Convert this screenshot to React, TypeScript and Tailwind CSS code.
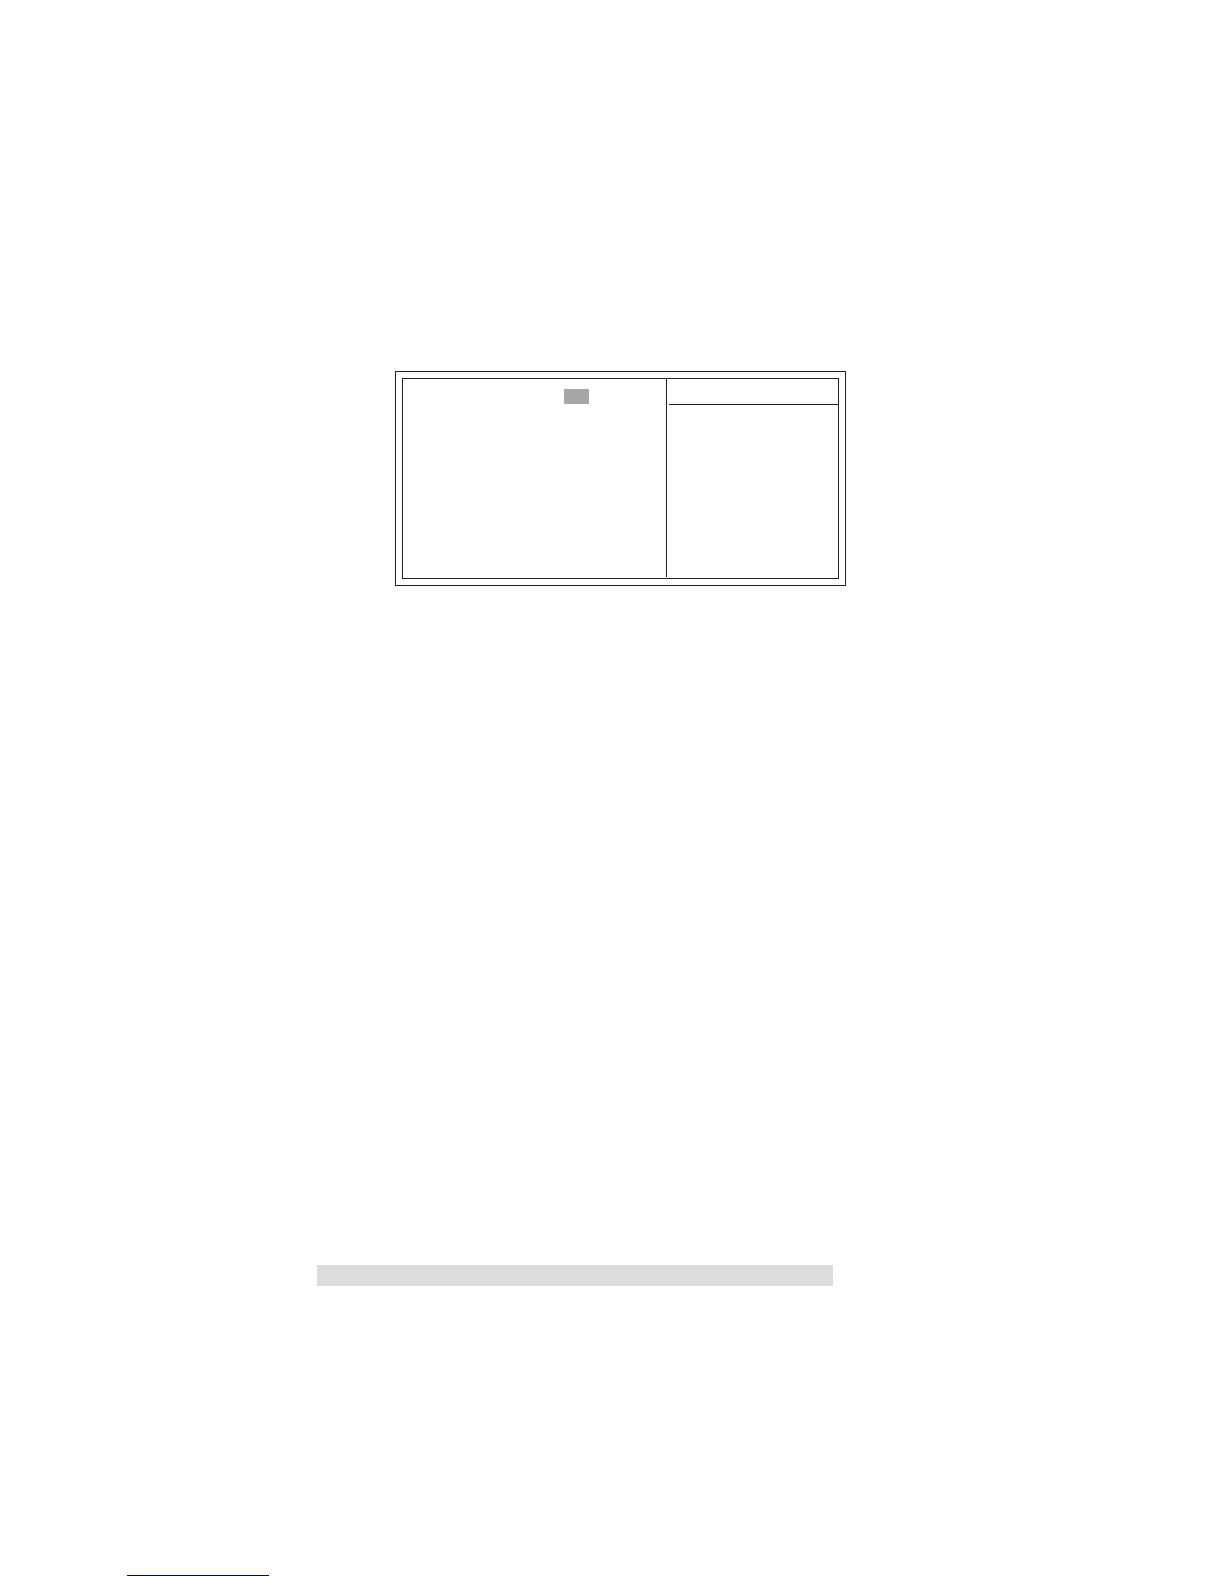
export default function App() {
  return (
    <main className="flex min-h-screen flex-col bg-white pt-[371px] pb-2 font-['Liberation_Sans',sans-serif]">
      <section aria-label="Setup screen" className="pl-[395px]">
        <div className="w-full max-w-[451px] border border-[#231f20] p-[6px]">
          <div className="flex h-[201px] border border-[#231f20]">
            <div className="mb-px flex w-[264px] shrink-0 items-start justify-end border-r border-[#231f20] pt-[10px] pr-[77px]">
              <span className="h-[15px] w-[25px] bg-[#a6a6a6]" />
            </div>
            <div className="ml-0.5 flex-1">
              <header className="h-[26px] border-b border-[#231f20]" />
            </div>
          </div>
        </div>
      </section>

      <div className="mt-[679px] pl-[317px]">
        <div className="h-[21px] w-full max-w-[516px] bg-[#dcdcdc]" />
      </div>

      <footer className="mt-[274px] flex pl-[127px]">
        <a
          href="#top"
          aria-label="Back to top"
          className="h-4 w-[142px] border-b border-[#000080]"
        />
      </footer>
    </main>
  );
}
